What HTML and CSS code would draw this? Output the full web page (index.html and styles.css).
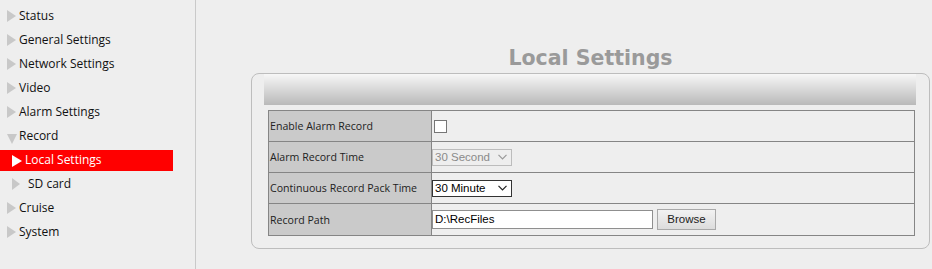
FILE: index.html
```html
<!DOCTYPE html>
<html>
<head>
<meta charset="utf-8">
<link rel="stylesheet" href="styles.css">
</head>
<body>
<div class="layout">
  <nav class="sidebar">
    <ul class="menu">
      <li class="item"><span class="tri"></span>Status</li>
      <li class="item"><span class="tri"></span>General Settings</li>
      <li class="item"><span class="tri"></span>Network Settings</li>
      <li class="item"><span class="tri"></span>Video</li>
      <li class="item"><span class="tri"></span>Alarm Settings</li>
      <li class="item"><span class="tri down"></span>Record</li>
      <li class="item sub active"><span class="tri white"></span>Local Settings</li>
      <li class="item sub sd"><span class="tri small"></span>SD card</li>
      <li class="item"><span class="tri"></span>Cruise</li>
      <li class="item"><span class="tri"></span>System</li>
    </ul>
  </nav>
  <main class="main">
    <h1 class="title">Local Settings</h1>
    <div class="panel">
      <div class="panel-head"></div>
      <table class="form">
        <tr>
          <td class="label">Enable Alarm Record</td>
          <td class="value"><span class="check"></span></td>
        </tr>
        <tr>
          <td class="label">Alarm Record Time</td>
          <td class="value"><span class="select disabled">30 Second<svg class="chev" width="9" height="6" viewBox="0 0 9 6"><path d="M0.5 0.8 L4.5 4.8 L8.5 0.8" fill="none" stroke="#999" stroke-width="1.2"/></svg></span></td>
        </tr>
        <tr>
          <td class="label">Continuous Record Pack Time</td>
          <td class="value"><span class="select">30 Minute<svg class="chev" width="9" height="6" viewBox="0 0 9 6"><path d="M0.5 0.8 L4.5 4.8 L8.5 0.8" fill="none" stroke="#222" stroke-width="1.2"/></svg></span></td>
        </tr>
        <tr class="last">
          <td class="label">Record Path</td>
          <td class="value"><span class="path-row"><span class="input">D:\RecFiles</span><span class="button">Browse</span></span></td>
        </tr>
      </table>
    </div>
  </main>
</div>
</body>
</html>
```

FILE: styles.css
```css
html, body {
  margin: 0;
  padding: 0;
  background: #eeeeee;
}
.layout {
  display: flex;
  height: 269px;
}
.sidebar {
  width: 195px;
  border-right: 1px solid #c9c9c9;
  box-sizing: content-box;
}
.menu {
  list-style: none;
  margin: 0;
  padding: 4px 0 0 0;
  font-family: "Open Sans", "Noto Sans", sans-serif;
  font-size: 12px;
  color: #111;
}
.item {
  height: 24px;
  line-height: 24px;
  display: flex;
  align-items: center;
  padding-left: 7px;
  width: 166px;
}
.tri {
  width: 0;
  height: 0;
  border-top: 6.5px solid transparent;
  border-bottom: 6.5px solid transparent;
  border-left: 9px solid #c8c8c8;
  margin-right: 3px;
}
.tri.down {
  border-left: 5px solid transparent;
  border-right: 5px solid transparent;
  border-top: 10px solid #c8c8c8;
  border-bottom: 0;
  margin-right: 2px;
  margin-top: 6px;
}
.item.sub {
  padding-left: 12px;
  width: 161px;
}
.tri.white {
  border-left: 10px solid #ffffff;
  border-top-width: 6.5px;
  border-bottom-width: 6.5px;
  margin-top: 2px;
  margin-right: 3px;
}
.tri.small {
  border-left: 8px solid #c8c8c8;
  margin-right: 8px;
}
.item.active {
  background: linear-gradient(to bottom, transparent 2px, #ff0000 2px, #ff0000 23px, transparent 23px);
  color: #fff;
}
.main {
  flex: 1;
  padding: 46px 0 0 55px;
}
.title {
  width: 679px;
  margin: 0 0 3px 0;
  text-align: center;
  font-family: "DejaVu Sans", sans-serif;
  font-weight: bold;
  font-size: 20.5px;
  line-height: 24px;
  color: #9a9a9a;
}
.panel {
  width: 677px;
  height: 174px;
  border: 1px solid #bdbdbd;
  border-radius: 8px;
}
.panel-head {
  margin-left: 12px;
  width: 652px;
  height: 31px;
  background: linear-gradient(to bottom, #f7f7f7, #b9b9b9);
}
.form {
  margin: 5px 0 0 16px;
  width: 647px;
  border-collapse: collapse;
  font-family: "DejaVu Sans", sans-serif;
}
.form td {
  border: 1px solid #858585;
  padding: 0;
  box-sizing: border-box;
}
.form tr td {
  height: 31px;
}
.form tr.last td {
  height: 32px;
}
.label {
  width: 163px;
  background: #cacaca;
  font-family: "Open Sans", "Noto Sans", sans-serif;
  font-size: 10.6px;
  color: #222;
  padding-left: 1px !important;
}
.value {
  background: #eeeeee;
  font-family: "Liberation Sans", Arial, sans-serif;
  font-size: 11.5px;
}
.check {
  display: block;
  width: 11px;
  height: 11px;
  margin-left: 2px;
  background: #fff;
  border: 1px solid #767676;
}
.select {
  display: flex;
  align-items: center;
  justify-content: space-between;
  box-sizing: border-box;
  width: 80px;
  height: 17px;
  padding: 0 4px 0 2px;
  background: #fff;
  border: 1px solid #333;
  color: #000;
}
.select.disabled {
  background: #eeeeee;
  border-color: #bcbcbc;
  color: #8a8a8a;
}
.path-row {
  display: flex;
  align-items: center;
  gap: 4px;
}
.input {
  box-sizing: border-box;
  width: 221px;
  height: 19px;
  line-height: 17px;
  padding-left: 2px;
  background: #fff;
  border: 1px solid #8f8f8f;
  color: #000;
}
.button {
  box-sizing: border-box;
  width: 59px;
  height: 21px;
  line-height: 19px;
  text-align: center;
  border: 1px solid #a9a9a9;
  background: linear-gradient(to bottom, #f2f2f2, #dcdcdc);
  color: #222;
}
```
